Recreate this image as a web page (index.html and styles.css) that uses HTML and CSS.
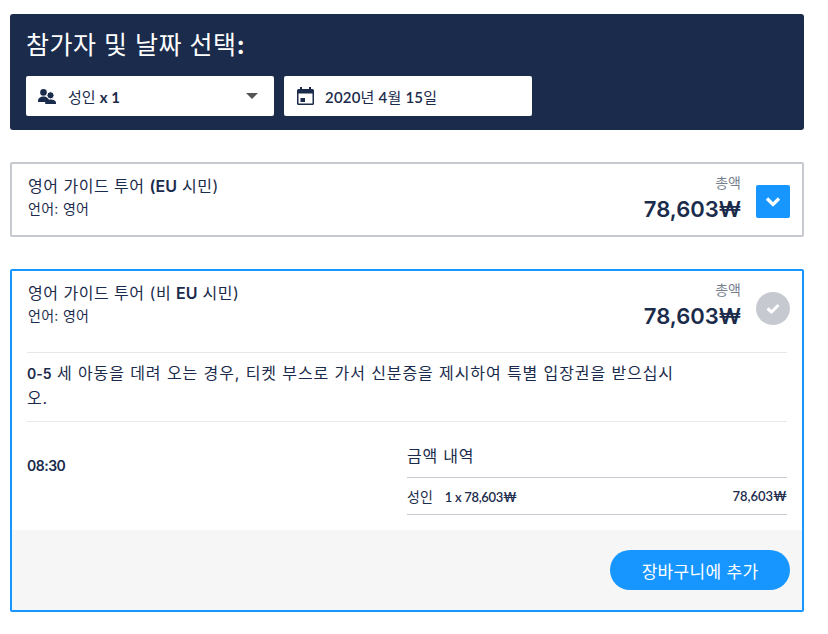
FILE: index.html
```html
<!DOCTYPE html>
<html lang="ko">
<head>
    <meta charset="UTF-8">
    <meta name="viewport" content="width=device-width, initial-scale=1.0">
    <title>참가자 및 날짜 선택</title>
    <link rel="stylesheet" href="styles.css">
</head>
<body>

    <div class="container">
        <div class="picker">
            <h2 class="picker-title">참가자 및 날짜 선택<b>:</b></h2>
            <div class="picker-fields">
                <div class="field field-people">
                    <svg class="field-icon" width="18" height="15" viewBox="0 0 18 15">
                        <circle cx="5.5" cy="3.4" r="3.300" fill="#1b2b4b"/>
                        <path d="M0 13v-1.500C0 9.200 2.500 7.500 5.500 7.500s5.500 1.700 5.500 4V13z" fill="#1b2b4b"/>
                        <circle cx="12.500" cy="6.300" r="3.600" fill="#1b2b4b" stroke="#fff" stroke-width="1"/>
                        <path d="M7.200 15v-1.200c0-2 2.300-3.300 5.300-3.300s5.500 1.300 5.500 3.300V15z" fill="#1b2b4b"/>
                    </svg>
                    <span class="field-text"><span class="ko">성인</span> <b class="latin">x 1</b></span>
                    <span class="caret"></span>
                </div>
                <div class="field field-date">
                    <svg class="field-icon" width="17" height="18" viewBox="0 0 17 18">
                        <path d="M3 0h2v2h7V0h2v2h1.500A1.500 1.500 0 0 1 17 3.500v13a1.500 1.500 0 0 1-1.500 1.500h-14A1.500 1.500 0 0 1 0 16.500v-13A1.500 1.500 0 0 1 1.500 2H3zM1.500 6.500v10h14v-10z" fill="#1b2b4b"/>
                        <rect x="3.500" y="11" width="4.500" height="4" fill="#1b2b4b"/>
                    </svg>
                    <span class="field-text date-text latin">2020<span class="ko">년</span> 4<span class="ko">월</span> 15<span class="ko">일</span></span>
                </div>
            </div>
        </div>

        <div class="tour">
            <div class="tour-head">
                <div class="tour-info">
                    <div class="tour-name">영어 가이드 투어 <b>(EU</b> 시민)</div>
                    <div class="tour-lang">언어: 영어</div>
                </div>
                <div class="tour-price">
                    <div class="price-label">총액</div>
                    <div class="price-value">78,603₩</div>
                </div>
                <span class="toggle">
                    <svg width="16" height="11" viewBox="0 0 16 11"><path d="M2 2.500l6 6 6-6" fill="none" stroke="#fff" stroke-width="3.200"/></svg>
                </span>
            </div>
        </div>

        <div class="tour tour-open">
            <div class="tour-head">
                <div class="tour-info">
                    <div class="tour-name">영어 가이드 투어 (비 <b>EU</b> 시민)</div>
                    <div class="tour-lang">언어: 영어</div>
                </div>
                <div class="tour-price">
                    <div class="price-label">총액</div>
                    <div class="price-value">78,603₩</div>
                </div>
                <span class="check">
                    <svg width="14" height="11" viewBox="0 0 14 11"><path d="M1.500 5.500l4 3.500 7-7" fill="none" stroke="#fff" stroke-width="3"/></svg>
                </span>
            </div>
            <div class="tour-note"><b>0-5</b> 세 아동을 데려 오는 경우, 티켓 부스로 가서 신분증을 제시하여 특별 입장권을 받으십시오.</div>
            <div class="tour-detail">
                <div class="tour-time">08:30</div>
                <div class="breakdown">
                    <div class="breakdown-title">금액 내역</div>
                    <div class="breakdown-row">
                        <span><span class="ko-row">성인</span> <b class="qty latin">1 x 78,603₩</b></span>
                        <b class="latin">78,603₩</b>
                    </div>
                </div>
            </div>
            <div class="tour-foot">
                <button class="add-btn" type="button">장바구니에 추가</button>
            </div>
        </div>
    </div>

</body>
</html>
```

FILE: styles.css
```css
body {
    margin: 0;
    padding: 0;
    box-sizing: border-box;
    font-family: "Inter", "Noto Sans CJK KR", sans-serif;
    color: #1b2b4b;
    background: #ffffff;
}

.container {
    padding: 14px 24px 0 10px;
}
.latin {
    font-family: "Lato", "Noto Sans CJK KR", sans-serif;
}

.picker {
    height: 116px;
    box-sizing: border-box;
    background: #1b2b4b;
    border-radius: 3px;
    padding: 14px 16px;
}
.picker-title {
    margin: 0 0 14px;
    font-size: 25px;
    letter-spacing: 0.5px;
    line-height: 34px;
    font-weight: 400;
    color: #ffffff;
}
.picker-fields {
    display: flex;
    gap: 10px;
}
.field {
    display: flex;
    align-items: center;
    height: 40px;
    box-sizing: border-box;
    background: #ffffff;
    border-radius: 2px;
    font-size: 15px;
}
.field-people {
    width: 248px;
    padding: 0 16px 0 12px;
}
.field-date {
    width: 248px;
    padding: 0 12px 0 13px;
}
.field-icon {
    flex: none;
    margin-right: 12px;
}
.field-date .field-icon {
    margin-right: 11px;
}
.field-text {
    flex: 1;
}
.date-text {
    font-weight: 600;
    letter-spacing: 0.2px;
}
.ko {
    font-family: "Inter", "Noto Sans CJK KR", sans-serif;
    font-weight: 400;
}
.caret {
    width: 0;
    height: 0;
    border-left: 6px solid transparent;
    border-right: 6px solid transparent;
    border-top: 6px solid #555555;
}

.tour {
    margin-top: 32px;
    border: 2px solid #c6c9d0;
    border-radius: 2px;
}
.tour-head {
    display: flex;
    align-items: flex-start;
    padding: 9px 12px 0 16px;
    height: 71px;
    box-sizing: border-box;
}
.tour-info {
    flex: 1;
    padding-top: 2px;
}
.tour-name {
    font-size: 16px;
    letter-spacing: 0.5px;
    line-height: 22px;
}
.tour-name b {
    font-weight: 600;
    letter-spacing: 0;
}
.tour-lang {
    margin-top: 2px;
    font-size: 14px;
    letter-spacing: 0.3px;
    line-height: 20px;
}
.tour-price {
    text-align: right;
}
.price-label {
    font-size: 14px;
    line-height: 20px;
    color: #777f8e;
}
.price-value {
    margin-top: 1px;
    font-size: 22px;
    line-height: 30px;
    font-weight: 600;
}
.toggle {
    display: flex;
    justify-content: center;
    align-items: center;
    width: 34px;
    height: 33px;
    margin: 12px 0 0 15px;
    background: #1896ff;
    border-radius: 2px;
}
.check {
    display: flex;
    justify-content: center;
    align-items: center;
    width: 34px;
    height: 33px;
    margin: 12px 0 0 15px;
    background: #c6c9d0;
    border-radius: 50%;
}

.tour-open {
    border-color: #1896ff;
    height: 343px;
    box-sizing: border-box;
    display: flex;
    flex-direction: column;
}
.tour-note {
    margin: 10px 15px 0;
    padding: 8px 112px 10px 0;
    border-top: 1px solid #e8e8e8;
    border-bottom: 1px solid #e8e8e8;
    font-size: 16px;
    letter-spacing: 0.9px;
    line-height: 25px;
}
.tour-note b {
    font-size: 14px;
    font-weight: 600;
    letter-spacing: 0;
}
.tour-detail {
    flex: 1;
    display: flex;
    padding: 0 15px;
}
.tour-time {
    width: 380px;
    padding-top: 34px;
    font-size: 14px;
    font-weight: 600;
    letter-spacing: -0.5px;
    line-height: 20px;
}
.breakdown {
    flex: 1;
}
.breakdown-title {
    padding-top: 22px;
    height: 56px;
    box-sizing: border-box;
    border-bottom: 1px solid #c6c9d0;
    font-size: 16px;
    letter-spacing: 0.8px;
    line-height: 24px;
}
.breakdown-row {
    display: flex;
    justify-content: space-between;
    align-items: center;
    height: 36px;
    border-bottom: 1px solid #c6c9d0;
    font-size: 14px;
}
.breakdown-row b {
    font-weight: 600;
    font-size: 13px;
}
.breakdown-row .qty {
    margin-left: 8px;
    letter-spacing: -0.3px;
}
.tour-foot {
    display: flex;
    justify-content: flex-end;
    align-items: center;
    height: 80px;
    padding-right: 12px;
    background: #f6f6f6;
}
.add-btn {
    width: 180px;
    height: 40px;
    border: 0;
    border-radius: 20px;
    background: #1896ff;
    color: #ffffff;
    font-family: inherit;
    font-size: 17px;
    letter-spacing: 0.3px;
}
```
